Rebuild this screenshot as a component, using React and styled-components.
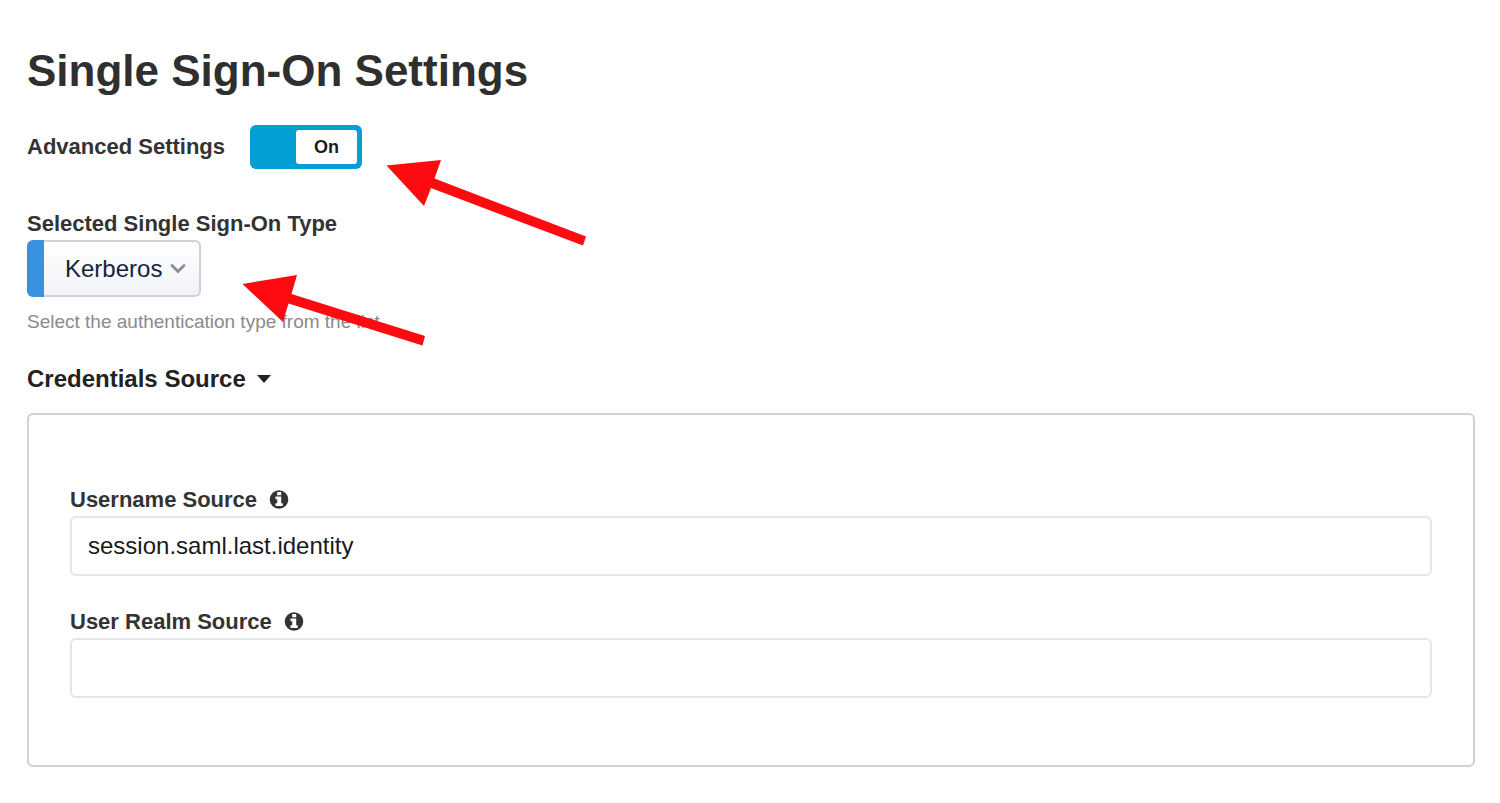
import React, { useState } from "react";
import styled, { createGlobalStyle } from "styled-components";

const GlobalStyle = createGlobalStyle`
  *, *::before, *::after { box-sizing: border-box; }
  body {
    margin: 0;
    background: #fff;
    color: #333;
    font-family: "Liberation Sans", Arial, sans-serif;
  }
`;

const Page = styled.main`
  position: relative;
  display: flex;
  flex-direction: column;
  padding: 45px 25px 35px 27px;
`;

const Title = styled.h1`
  margin: 0 0 28px;
  color: #2f2f2f;
  font-size: 44px;
  line-height: 52px;
  font-weight: 700;
`;

const SettingRow = styled.div`
  display: flex;
  align-items: center;
  gap: 25px;
  margin-bottom: 41px;
`;

const Label = styled.label`
  display: flex;
  align-items: center;
  gap: 12px;
  font-size: 22px;
  line-height: 28px;
  font-weight: 700;
  color: #333;
`;

const SwitchTrack = styled.span`
  display: grid;
  justify-items: ${({ $on }) => ($on ? "end" : "start")};
  width: 112px;
  height: 44px;
  padding: 5px;
  border-radius: 6px;
  background: ${({ $on }) => ($on ? "#049fd4" : "#b8bcc4")};
`;

const SwitchInput = styled.input`
  grid-area: 1 / 1;
  justify-self: stretch;
  appearance: none;
  margin: 0;
  cursor: pointer;
`;

const SwitchKnob = styled.span`
  grid-area: 1 / 1;
  display: flex;
  align-items: center;
  justify-content: center;
  width: 61px;
  height: 34px;
  border-radius: 3px;
  background: #fff;
  color: #1a1a1a;
  font-size: 18px;
  font-weight: 700;
  pointer-events: none;
`;

const Field = styled.div`
  display: flex;
  flex-direction: column;
  align-items: ${({ $fit }) => ($fit ? "flex-start" : "stretch")};
  gap: 2px;
`;

const SelectBox = styled.div`
  display: grid;
  grid-template-columns: 17px auto;
  align-items: center;
  height: 57px;

  &::before {
    content: "";
    align-self: stretch;
    border-radius: 6px 0 0 6px;
    background: #3992de;
  }
`;

const Select = styled.select`
  grid-area: 1 / 2;
  appearance: none;
  height: 57px;
  padding: 0 36px 0 21px;
  border: 2px solid #d0d1df;
  border-left: 0;
  border-radius: 0 6px 6px 0;
  background: linear-gradient(#fff, #f2f3f7);
  color: #16233d;
  font: 24px "Liberation Sans", Arial, sans-serif;
`;

const Chevron = styled.svg`
  grid-area: 1 / 2;
  justify-self: end;
  width: 16px;
  height: 10px;
  margin-right: 15px;
  pointer-events: none;
`;

const Help = styled.p`
  margin: 13px 0 31px;
  color: #8a8a8a;
  font-size: 19px;
  line-height: 24px;
`;

const SectionToggle = styled.button`
  display: flex;
  align-items: center;
  align-self: flex-start;
  gap: 11px;
  margin: 0 0 20px;
  padding: 0;
  border: 0;
  background: none;
  color: #222;
  font: 700 24px/28px "Liberation Sans", Arial, sans-serif;
  cursor: pointer;
`;

const Caret = styled.svg`
  width: 14px;
  height: 8px;
`;

const Panel = styled.section`
  display: flex;
  flex-direction: column;
  gap: 32px;
  padding: 71px 41px 67px;
  border: 2px solid #d0d0de;
  border-radius: 6px;
`;

const TextInput = styled.input`
  width: 100%;
  height: 60px;
  padding: 0 16px;
  border: 2px solid #e2e5eb;
  border-radius: 6px;
  background: #fff;
  color: #1a1a1a;
  font: 24px "Liberation Sans", Arial, sans-serif;
`;

const Info = styled.svg`
  width: 20px;
  height: 20px;
`;

const Annotation = styled.svg`
  position: absolute;
  top: ${({ $top }) => $top}px;
  left: ${({ $left }) => $left}px;
  pointer-events: none;
  fill: #ff0a10;
`;

function InfoIcon() {
  return (
    <Info viewBox="0 0 20 20" aria-hidden="true">
      <circle cx="10" cy="9.500" r="9.300" fill="#333" />
      <path fill="#fff" d="M8.200 2h4v3.200h-4zM6.500 6.600h5.700v6.700h1.500v2.600H6.500v-2.600h1.700V9.200H6.500z" />
    </Info>
  );
}

function SourceField({ id, label, initial }) {
  return (
    <Field>
      <Label htmlFor={id}>
        {label}
        <InfoIcon />
      </Label>
      <TextInput id={id} type="text" defaultValue={initial} />
    </Field>
  );
}

export default function App() {
  const [advanced, setAdvanced] = useState(true);
  const [open, setOpen] = useState(true);

  return (
    <>
      <GlobalStyle />
      <Page>
        <Title>Single Sign-On Settings</Title>

        <SettingRow>
          <Label htmlFor="advanced">Advanced Settings</Label>
          <SwitchTrack $on={advanced}>
            <SwitchInput
              id="advanced"
              type="checkbox"
              role="switch"
              checked={advanced}
              onChange={(e) => setAdvanced(e.target.checked)}
            />
            <SwitchKnob>{advanced ? "On" : "Off"}</SwitchKnob>
          </SwitchTrack>
        </SettingRow>

        <Field $fit>
          <Label htmlFor="sso-type">Selected Single Sign-On Type</Label>
          <SelectBox>
            <Select id="sso-type" defaultValue="Kerberos">
              <option>Kerberos</option>
            </Select>
            <Chevron viewBox="0 0 16 10" aria-hidden="true">
              <path
                d="M2 1.500l6 6 6-6"
                fill="none"
                stroke="#8b8c98"
                strokeWidth="2.800"
                strokeLinecap="round"
              />
            </Chevron>
          </SelectBox>
        </Field>
        <Help>Select the authentication type from the list</Help>

        <SectionToggle type="button" aria-expanded={open} onClick={() => setOpen(!open)}>
          Credentials Source
          <Caret viewBox="0 0 14 8" aria-hidden="true">
            <path d="M0 0h14L7 8z" fill="#222" />
          </Caret>
        </SectionToggle>

        {open && (
          <Panel>
            <SourceField id="username" label="Username Source" initial="session.saml.last.identity" />
            <SourceField id="realm" label="User Realm Source" initial="" />
          </Panel>
        )}

        <Annotation $top={159} $left={386} width="201" height="88" viewBox="386 159 201 88" aria-hidden="true">
          <path d="M386.500 165.500L441 160L434.500 178.500L586 236.500L583 245.500L431 188L424 206Z" />
        </Annotation>
        <Annotation $top={274} $left={242} width="184" height="73" viewBox="242 274 184 73" aria-hidden="true">
          <path d="M242.500 284L297 275L291.500 294L425 336L422.500 345.500L288.500 303.500L283 322Z" />
        </Annotation>
      </Page>
    </>
  );
}
